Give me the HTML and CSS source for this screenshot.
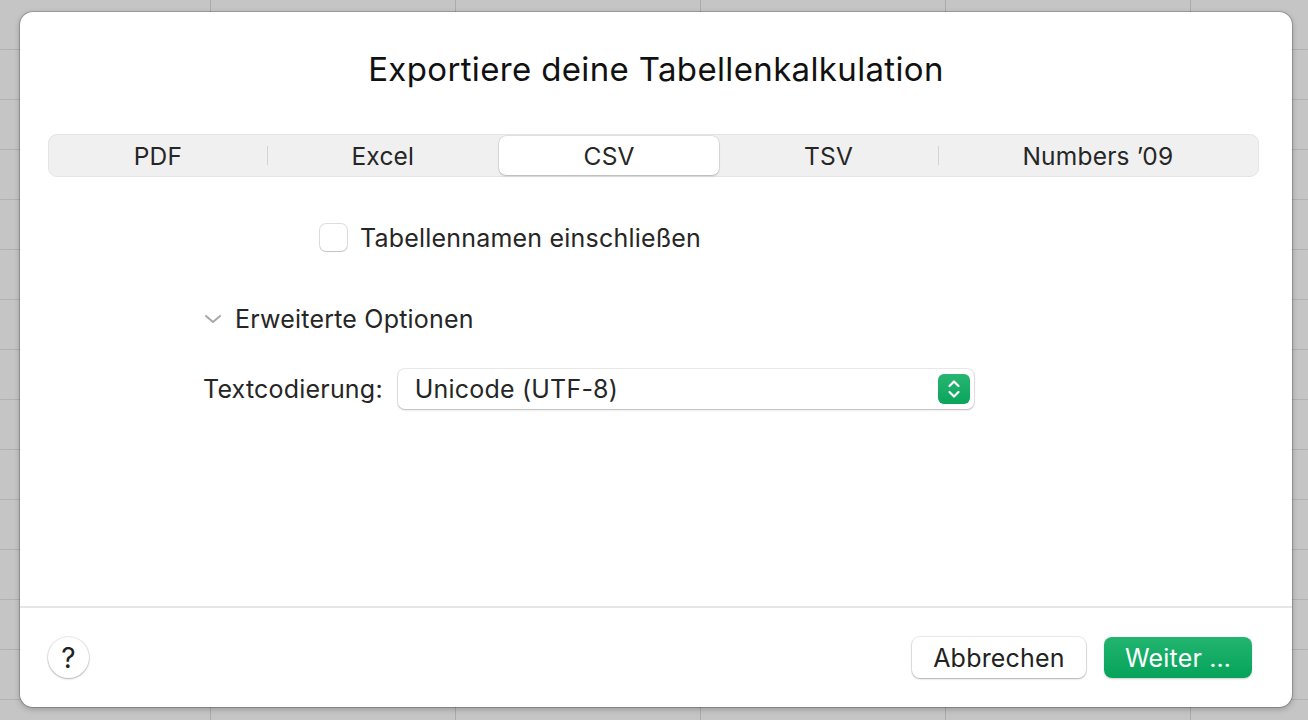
FILE: index.html
```html
<!DOCTYPE html>
<html lang="de">
<head>
<meta charset="utf-8">
<title>Exportieren</title>
<link rel="stylesheet" href="styles.css">
</head>
<body>
<div class="backdrop">
  <div class="dialog">
    <h1 class="title">Exportiere deine Tabellenkalkulation</h1>
    <div class="segmented">
      <div class="seg">PDF</div>
      <div class="seg sep-left">Excel</div>
      <div class="seg selected">CSV</div>
      <div class="seg">TSV</div>
      <div class="seg sep-left">Numbers ’09</div>
    </div>
    <div class="content">
      <label class="check-row">
        <span class="checkbox"></span>
        <span class="check-label">Tabellennamen einschließen</span>
      </label>
      <div class="disclosure-row">
        <svg class="chev" width="18" height="10" viewBox="0 0 18 10"><path d="M2 2 L9 8 L16 2" fill="none" stroke="#a8a8a8" stroke-width="2" stroke-linecap="round" stroke-linejoin="round"/></svg>
        <span class="disclosure-label">Erweiterte Optionen</span>
      </div>
      <div class="popup-row">
        <span class="popup-label">Textcodierung:</span>
        <div class="popup">
          <span class="popup-value">Unicode (UTF-8)</span>
          <span class="stepper">
            <svg width="32" height="30" viewBox="0 0 32 30"><path d="M11.5 12 L16 7.5 L20.5 12" fill="none" stroke="#fff" stroke-width="2.2" stroke-linecap="round" stroke-linejoin="round"/><path d="M11.5 18 L16 22.5 L20.5 18" fill="none" stroke="#fff" stroke-width="2.2" stroke-linecap="round" stroke-linejoin="round"/></svg>
          </span>
        </div>
      </div>
    </div>
    <div class="footer">
      <button class="help">?</button>
      <div class="actions">
        <button class="btn">Abbrechen</button>
        <button class="btn primary">Weiter …</button>
      </div>
    </div>
  </div>
</div>
</body>
</html>
```

FILE: styles.css
```css
html, body {
  margin: 0;
  padding: 0;
  width: 1308px;
  height: 720px;
  overflow: hidden;
}
body {
  font-family: Inter, "Noto Sans", "Liberation Sans", sans-serif;
  color: #262626;
  letter-spacing: 0.2px;
  background-color: #c5c5c5;
  background-image:
    linear-gradient(to right, #ababab 0, #ababab 1px, transparent 1px),
    linear-gradient(to bottom, #b2b2b2 0, #b2b2b2 1px, transparent 1px);
  background-size: 245px 100%, 100% 50px;
  background-position: 210px 0, 0 49px;
}
.backdrop {
  padding: 12px 0 0 20px;
}
.dialog {
  width: 1272px;
  height: 695px;
  background: #fff;
  border-radius: 13px;
  box-shadow: 0 0 0 1px rgba(0,0,0,0.18), 0 2px 6px rgba(0,0,0,0.25);
  display: flex;
  flex-direction: column;
  box-sizing: border-box;
}
.title {
  margin: 37px 0 0 0;
  font-size: 33px;
  line-height: 40px;
  font-weight: 400;
  color: #111;
  text-align: center;
  letter-spacing: 0.35px;
}
.segmented {
  margin: 45px 33px 0 28px;
  height: 43px;
  box-sizing: border-box;
  background: #f0f0f0;
  border: 1px solid #e4e4e4;
  border-radius: 9px;
  display: flex;
  align-items: stretch;
  padding: 1px 0;
}
.seg {
  flex: 1 1 auto;
  display: flex;
  align-items: center;
  justify-content: center;
  font-size: 24.5px;
  color: #262626;
  position: relative;
}
.seg.sep-left::before {
  content: "";
  position: absolute;
  left: 0;
  top: 10px;
  bottom: 10px;
  width: 1px;
  background: #d4d4d4;
}
.seg.selected {
  background: #fff;
  border-radius: 7px;
  box-shadow: 0 0 0 0.5px rgba(0,0,0,0.12), 0 1px 2px rgba(0,0,0,0.2);
}
.content {
  flex: 1;
  display: flex;
  flex-direction: column;
  padding-top: 47px;
}
.check-row {
  display: flex;
  align-items: center;
  margin-left: 300px;
  height: 27px;
  gap: 13px;
}
.checkbox {
  width: 27px;
  height: 27px;
  box-sizing: border-box;
  border-radius: 6px;
  background: #fff;
  box-shadow: 0 0 0 1px rgba(0,0,0,0.13), 0 1px 1px rgba(0,0,0,0.12);
}
.check-label {
  font-size: 25px;
}
.disclosure-row {
  display: flex;
  align-items: center;
  margin-left: 184px;
  margin-top: 53px;
  height: 30px;
  gap: 13px;
}
.disclosure-label {
  font-size: 25px;
}
.popup-row {
  display: flex;
  align-items: center;
  margin-left: 183px;
  margin-top: 35px;
  gap: 15px;
}
.popup-label {
  font-size: 25px;
}
.popup {
  width: 576px;
  height: 40px;
  box-sizing: border-box;
  border-radius: 7px;
  background: #fff;
  box-shadow: 0 0 0 1px rgba(0,0,0,0.08), 0 1px 2px rgba(0,0,0,0.22);
  display: flex;
  align-items: center;
  justify-content: space-between;
  padding: 0 4px 0 17px;
}
.popup-value {
  font-size: 25px;
}
.stepper {
  width: 32px;
  height: 30px;
  border-radius: 6px;
  background: linear-gradient(to bottom, #27b673, #0ba45b);
  display: flex;
}
.footer {
  height: 101px;
  border-top: 2px solid #e6e6e6;
  box-sizing: border-box;
  display: flex;
  align-items: center;
  justify-content: space-between;
  padding: 0 40px 0 28px;
}
.help {
  width: 41px;
  height: 41px;
  border-radius: 50%;
  border: none;
  background: #fff;
  box-shadow: 0 0 0 1px rgba(0,0,0,0.08), 0 1px 2px rgba(0,0,0,0.25);
  font-family: Inter, "Noto Sans", sans-serif;
  font-size: 28px;
  font-weight: 400;
  color: #222;
  padding: 0;
  display: flex;
  align-items: center;
  justify-content: center;
}
.actions {
  display: flex;
  gap: 18px;
}
.btn {
  height: 41px;
  border: none;
  border-radius: 8px;
  background: #fff;
  box-shadow: 0 0 0 1px rgba(0,0,0,0.08), 0 1px 2px rgba(0,0,0,0.25);
  font-family: Inter, "Noto Sans", sans-serif;
  font-size: 25px;
  letter-spacing: 0.2px;
  color: #222;
  padding: 0;
  width: 174px;
}
.btn.primary {
  width: 148px;
  color: #fff;
  background: linear-gradient(to bottom, #22b570, #06a35a);
  box-shadow: 0 1px 2px rgba(0,0,0,0.2);
}
```
